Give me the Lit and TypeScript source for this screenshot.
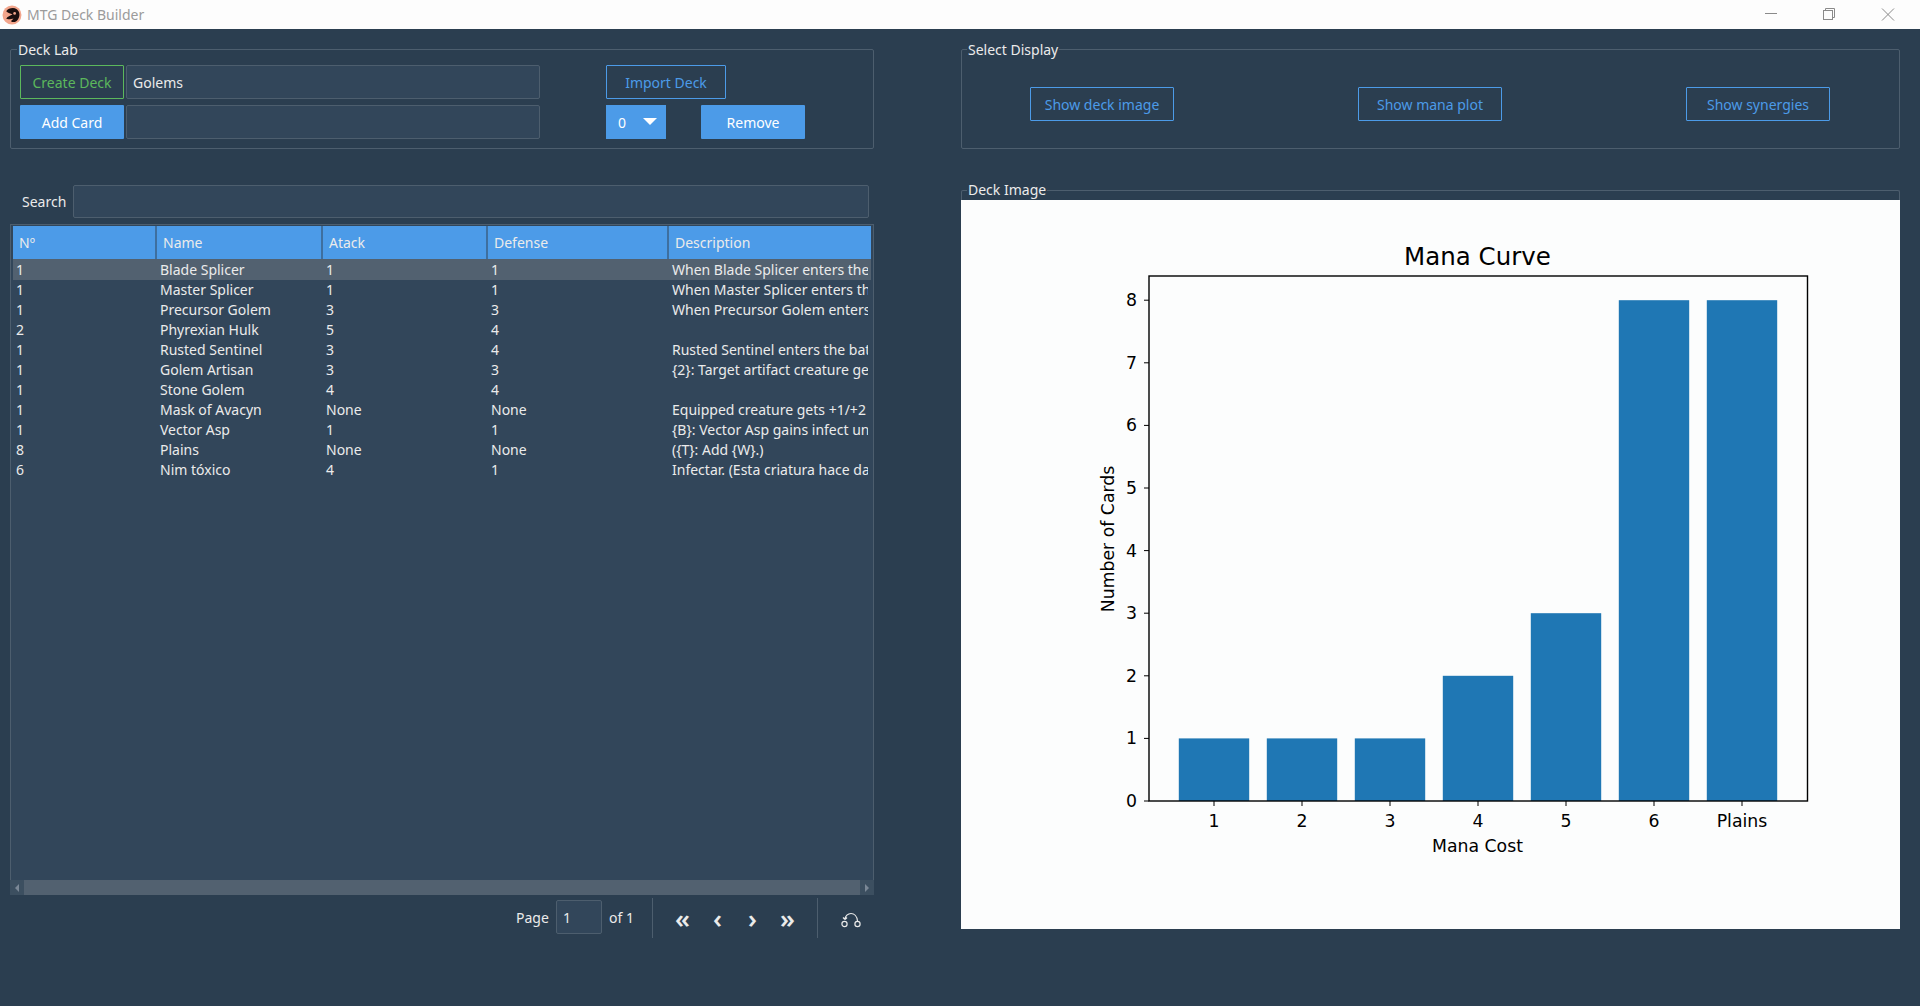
import { LitElement, css, html, svg } from 'lit';
import { customElement } from 'lit/decorators.js';

const cards = [
  ['1', 'Blade Splicer', '1', '1', 'When Blade Splicer enters the battlefield'],
  ['1', 'Master Splicer', '1', '1', 'When Master Splicer enters the battlefield'],
  ['1', 'Precursor Golem', '3', '3', 'When Precursor Golem enters the battlefield'],
  ['2', 'Phyrexian Hulk', '5', '4', ''],
  ['1', 'Rusted Sentinel', '3', '4', 'Rusted Sentinel enters the battlefield tapped'],
  ['1', 'Golem Artisan', '3', '3', '{2}: Target artifact creature gets +1/+1'],
  ['1', 'Stone Golem', '4', '4', ''],
  ['1', 'Mask of Avacyn', 'None', 'None', 'Equipped creature gets +1/+2 and has hexproof'],
  ['1', 'Vector Asp', '1', '1', '{B}: Vector Asp gains infect until end of turn'],
  ['8', 'Plains', 'None', 'None', '({T}: Add {W}.)'],
  ['6', 'Nim tóxico', '4', '1', 'Infectar. (Esta criatura hace daño a las criaturas)'],
];

const curve: [string, number][] = [
  ['1', 1], ['2', 1], ['3', 1], ['4', 2], ['5', 3], ['6', 8], ['Plains', 8],
];

const Y0 = 600;
const YSTEP = 62.6;

@customElement('app-root')
export class AppRoot extends LitElement {
  static styles = css`
    :host {
      display: block;
      height: 1006px;
      overflow: hidden;
      background: #2b3e50;
      color: #ebebeb;
      font: 14px/20px "Noto Sans", sans-serif;
    }

    .titlebar {
      height: 29px;
      background: #fdfdfd;
      display: flex;
      align-items: center;
      padding: 0 4px 0 2px;
      color: #9b9b9b;
      font-size: 14px;
    }
    .titlebar .app-icon { width: 20px; height: 20px; margin-right: 5px; }
    .controls { margin-left: auto; display: flex; }
    .controls svg { width: 58px; height: 29px; display: block; }

    .main { display: flex; gap: 87px; padding: 10px 0 0 10px; }
    .left { width: 864px; }
    .right { width: 939px; }
    .right legend { margin-left: 5px; }

    fieldset {
      margin: 0;
      padding: 0;
      min-width: 0;
      border: 1px solid #4d5e6e;
      border-radius: 2px;
    }
    legend { padding: 1px 1px 0; margin-left: 6px; line-height: 20px; height: 20px; box-sizing: border-box; }

    button {
      font: inherit;
      line-height: 1;
      padding: 2px 0 0;
      height: 34px;
      border-radius: 1px;
      background: transparent;
    }
    .solid { background: #4c9be8; color: #fff; border: none; }
    .outline { border: 1px solid #4c9be8; color: #4c9be8; }
    .outline.green { border-color: #5cb85c; color: #5cb85c; }

    .entry {
      box-sizing: border-box;
      height: 34px;
      background: #32465a;
      border: 1px solid #4d5e6e;
      border-radius: 2px;
      color: #ebebeb;
      padding: 2px 6px 0;
      display: flex;
      align-items: center;
    }

    .lab { padding: 6px 9px 9px; display: flex; flex-direction: column; gap: 6px; }
    .lab-row { display: flex; gap: 2px; }
    .w-btn { width: 104px; }
    .w-entry { width: 414px; }
    .import { width: 120px; margin-left: 64px; }
    .count {
      width: 60px;
      margin-left: 64px;
      margin-right: 33px;
      display: flex;
      align-items: center;
      padding: 2px 0 0 12px;
      box-sizing: border-box;
    }
    .caret {
      width: 0;
      height: 0;
      margin-left: 17px;
      margin-top: -3px;
      border-left: 7px solid transparent;
      border-right: 7px solid transparent;
      border-top: 7px solid #fff;
    }

    .search { display: flex; align-items: center; margin-top: 36px; padding-left: 12px; gap: 7px; }
    .search .entry { width: 796px; height: 33px; }

    .table {
      box-sizing: border-box;
      height: 656px;
      margin-top: 6px;
      padding: 1px 2px;
      background: #32465a;
      border: 1px solid #4d5e6e;
      border-bottom: none;
    }
    .tr {
      display: grid;
      grid-template-columns: 143px 166px 165px 181px 203px;
      height: 20px;
      line-height: 20px;
    }
    .tr.head { height: 33px; line-height: 33px; background: #4c9be8; }
    .tr.head > div { margin-left: -1px; padding-left: 6px; border-left: 2px solid #3e6f9f; box-sizing: border-box; }
    .tr.head > div:first-child { margin-left: 0; padding-left: 6px; border-left: none; }
    .tr.selected { background: #526170; height: 21px; line-height: 22px; }
    .tr > .cell { padding-left: 4px; white-space: nowrap; overflow: hidden; }
    .tr > .cell:first-child { padding-left: 3px; }
    .tr > .cell:last-child { margin-right: 3px; }

    .scrollbar { display: flex; height: 15px; background: #526170; }
    .arrow {
      width: 14px;
      background: #3c4f60;
      display: flex;
      align-items: center;
      justify-content: center;
    }
    .arrow svg { width: 6px; height: 10px; }
    .thumb { flex: 1; }

    .pager { display: flex; align-items: center; justify-content: flex-end; height: 40px; margin-top: 3px; padding-right: 6px; }
    .pager .page-label { width: 40px; }
    .pager .entry { width: 46px; height: 34px; margin-top: -2px; }
    .pager .of { width: 43px; padding-left: 7px; }
    .sep { width: 1px; height: 40px; background: #4d5e6e; }
    .nav { width: 35px; text-align: center; font-size: 26px; font-weight: 600; line-height: 40px; }
    .nav-wrap { display: flex; padding: 0 12px; }
    .pager .reset { width: 20px; height: 20px; margin: 4px 7px 0 23px; }

    .display { padding: 28px 0 27px 68px; display: flex; gap: 184px; }
    .display button { width: 144px; }

    .image-frame { margin-top: 31px; border-bottom: none; }
    .image-frame legend { padding-top: 0; }
    .image { display: block; width: 939px; height: 729px; margin: 0 -1px; background: #fcfdfd; }
    .image text { font-family: "DejaVu Sans", sans-serif; fill: #000; font-size: 17.3px; }
    .image text.title { font-size: 24.5px; }
  `;

  renderChart() {
    return html`
      <svg class="image" viewBox="0 -1 939 729">
        ${curve.map(([label, n], i) => {
          const cx = 253 + 88 * i;
          return svg`
            <rect x=${cx - 35.2} y=${Y0 - n * YSTEP} width="70.4" height=${n * YSTEP} fill="#1f77b4"></rect>
            <line x1=${cx} x2=${cx} y1=${Y0} y2=${Y0 + 5} stroke="#000"></line>
            <text x=${cx} y="626" text-anchor="middle">${label}</text>
          `;
        })}
        ${[0, 1, 2, 3, 4, 5, 6, 7, 8].map(n => svg`
          <line x1="183" x2="188" y1=${Y0 - n * YSTEP} y2=${Y0 - n * YSTEP} stroke="#000"></line>
          <text x="176" y=${Y0 - n * YSTEP + 6} text-anchor="end">${n}</text>
        `)}
        <rect x="188" y="75" width="658.5" height="525" fill="none" stroke="#000" stroke-width="1.4"></rect>
        <text class="title" x="516.5" y="64" text-anchor="middle">Mana Curve</text>
        <text x="516.5" y="651" text-anchor="middle">Mana Cost</text>
        <text transform="translate(153 338) rotate(-90)" text-anchor="middle">Number of Cards</text>
      </svg>
    `;
  }

  render() {
    return html`
      <div class="titlebar">
        <svg class="app-icon" viewBox="0 0 19 19">
          <circle cx="9.5" cy="9.5" r="9" fill="#f2a58c"></circle>
          <path d="M4 6c2-3 7-4 10-2 3 2 3 6 2 8-1 3-4 5-7 4-1-1 1-2 2-3-2 0-5 1-7 0 1-2 4-3 6-4-2-1-4-1-6-3z" fill="#1c0f0f"></path>
          <circle cx="12" cy="8" r="1.3" fill="#f2a58c"></circle>
        </svg>
        MTG Deck Builder
        <div class="controls">
          <svg viewBox="0 0 58 29">
            <line x1="23" x2="35" y1="13.5" y2="13.5" stroke="#8a8a8a"></line>
          </svg>
          <svg viewBox="0 0 58 29">
            <rect x="23.5" y="10.5" width="9" height="9" fill="none" stroke="#8a8a8a"></rect>
            <path d="M25.5 10.5v-2h9v9h-2" fill="none" stroke="#8a8a8a"></path>
          </svg>
          <svg viewBox="0 0 58 29">
            <path d="M24 8.5l12 12M36 8.5l-12 12" stroke="#8a8a8a" fill="none"></path>
          </svg>
        </div>
      </div>

      <div class="main">
        <div class="left">
          <fieldset>
            <legend>Deck Lab</legend>
            <div class="lab">
              <div class="lab-row">
                <button class="outline green w-btn">Create Deck</button>
                <div class="entry w-entry">Golems</div>
                <button class="outline import">Import Deck</button>
              </div>
              <div class="lab-row">
                <button class="solid w-btn">Add Card</button>
                <div class="entry w-entry"></div>
                <div class="solid count">0<span class="caret"></span></div>
                <button class="solid w-btn">Remove</button>
              </div>
            </div>
          </fieldset>

          <div class="search">
            <span>Search</span>
            <div class="entry"></div>
          </div>

          <div class="table">
            <div class="tr head">
              <div>Nº</div><div>Name</div><div>Atack</div><div>Defense</div><div>Description</div>
            </div>
            ${cards.map((row, i) => html`
              <div class="tr ${i === 0 ? 'selected' : ''}">
                ${row.map(c => html`<div class="cell">${c}</div>`)}
              </div>
            `)}
          </div>
          <div class="scrollbar">
            <div class="arrow"><svg viewBox="0 0 6 10"><path d="M5 1L1 5l4 4z" fill="#7b8896"></path></svg></div>
            <div class="thumb"></div>
            <div class="arrow"><svg viewBox="0 0 6 10"><path d="M1 1l4 4-4 4z" fill="#7b8896"></path></svg></div>
          </div>

          <div class="pager">
            <span class="page-label">Page</span>
            <div class="entry">1</div>
            <span class="of">of 1</span>
            <div class="sep"></div>
            <div class="nav-wrap">
              <span class="nav">«</span><span class="nav">‹</span><span class="nav">›</span><span class="nav">»</span>
            </div>
            <div class="sep"></div>
            <svg class="reset" viewBox="0 0 20 20" fill="none" stroke="#ebebeb" stroke-width="1.2">
              <circle cx="3.5" cy="14" r="2.6"></circle>
              <circle cx="16.5" cy="14" r="2.6"></circle>
              <path d="M4 9.5C4 6 7 3.5 10 3.5s6 2.5 6.5 7.5M4 9.5l-2-2M4 9.5l2-2"></path>
            </svg>
          </div>
        </div>

        <div class="right">
          <fieldset>
            <legend>Select Display</legend>
            <div class="display">
              <button class="outline">Show deck image</button>
              <button class="outline">Show mana plot</button>
              <button class="outline">Show synergies</button>
            </div>
          </fieldset>
          <fieldset class="image-frame">
            <legend>Deck Image</legend>
            ${this.renderChart()}
          </fieldset>
        </div>
      </div>
    `;
  }
}
